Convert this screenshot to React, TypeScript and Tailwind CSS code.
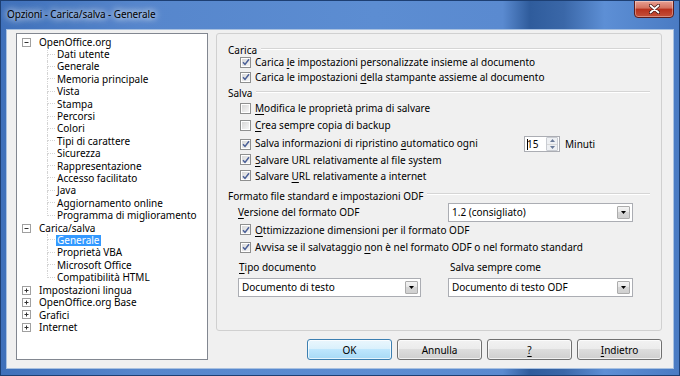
import React from "react";

type TreeRow = {
  label: string;
  level: 0 | 1;
  expander?: "-" | "+";
  selected?: boolean;
  last?: boolean;
};

const tree: TreeRow[] = [
  { label: "OpenOffice.org", level: 0, expander: "-" },
  { label: "Dati utente", level: 1 },
  { label: "Generale", level: 1 },
  { label: "Memoria principale", level: 1 },
  { label: "Vista", level: 1 },
  { label: "Stampa", level: 1 },
  { label: "Percorsi", level: 1 },
  { label: "Colori", level: 1 },
  { label: "Tipi di carattere", level: 1 },
  { label: "Sicurezza", level: 1 },
  { label: "Rappresentazione", level: 1 },
  { label: "Accesso facilitato", level: 1 },
  { label: "Java", level: 1 },
  { label: "Aggiornamento online", level: 1 },
  { label: "Programma di miglioramento", level: 1, last: true },
  { label: "Carica/salva", level: 0, expander: "-" },
  { label: "Generale", level: 1, selected: true },
  { label: "Proprietà VBA", level: 1 },
  { label: "Microsoft Office", level: 1 },
  { label: "Compatibilità HTML", level: 1, last: true },
  { label: "Impostazioni lingua", level: 0, expander: "+" },
  { label: "OpenOffice.org Base", level: 0, expander: "+" },
  { label: "Grafici", level: 0, expander: "+" },
  { label: "Internet", level: 0, expander: "+" },
];

const font = "font-['Noto_Sans','Open_Sans',sans-serif]";

const U = ({ children }: { children: React.ReactNode }) => (
  <span className="underline underline-offset-[2px] decoration-[1px]">{children}</span>
);

function Expander({ sign }: { sign: "-" | "+" }) {
  return (
    <span className="w-[9px] h-[9px] border border-[#a0a0a0] bg-white flex items-center justify-center shrink-0">
      <svg width="7" height="7" viewBox="0 0 7 7">
        <path d="M1.5 3.5h4" stroke="#333" strokeWidth="1" />
        {sign === "+" && <path d="M3.5 1.5v4" stroke="#333" strokeWidth="1" />}
      </svg>
    </span>
  );
}

function Tree() {
  return (
    <div className="w-[192px] h-[327px] bg-white border border-[#828790] pt-[2px] text-[10px] text-black">
      {tree.map((row, i) =>
        row.level === 0 ? (
          <div key={i} className="h-[12.4px] flex items-center pl-[5px]">
            <Expander sign={row.expander ?? "+"} />
            <span className="ml-[8px] leading-[12px] whitespace-nowrap">{row.label}</span>
          </div>
        ) : (
          <div key={i} className="h-[12.4px] flex items-stretch pl-[30px]">
            <div className="w-[8px] flex flex-col">
              <div className="h-1/2 border-l border-b border-dotted border-[#d4d4d4]" />
              <div className={`h-1/2 ${row.last ? "" : "border-l border-dotted border-[#d4d4d4]"}`} />
            </div>
            <div className="flex items-center ml-[1px]">
              <span
                className={`leading-[11px] px-[1px] whitespace-nowrap ${
                  row.selected ? "bg-[#3399ff] text-white" : ""
                }`}
              >
                {row.label}
              </span>
            </div>
          </div>
        )
      )}
    </div>
  );
}

function Check({ checked }: { checked?: boolean }) {
  return (
    <span className="w-[11px] h-[11px] border border-[#8e8f8f] bg-white p-[1px] shrink-0 flex">
      <span className="flex-1 bg-[linear-gradient(135deg,#d8d8d8,#f6f6f6)] flex items-center justify-center">
        {checked && (
          <svg width="8" height="8" viewBox="0 0 8 8">
            <path d="M1 4.2 L3 6.4 L7 1.2" stroke="#4a5f97" strokeWidth="1.5" fill="none" />
          </svg>
        )}
      </span>
    </span>
  );
}

function CheckRow({
  checked,
  children,
  className = "",
}: {
  checked?: boolean;
  children: React.ReactNode;
  className?: string;
}) {
  return (
    <div className={`h-[12px] flex items-center pl-[12px] ${className}`}>
      <Check checked={checked} />
      <span className="ml-[4px] leading-[12px] whitespace-nowrap">{children}</span>
    </div>
  );
}

function Heading({ children, className = "" }: { children: React.ReactNode; className?: string }) {
  return (
    <div className={`h-[12px] flex items-center pr-[11px] ${className}`}>
      <span className="leading-[12px] whitespace-nowrap">{children}</span>
      <div className="flex-1 ml-[4px] mb-[3px] h-[2px] border-t border-[#d5d5d5] border-b border-b-white" />
    </div>
  );
}

function Select({ value, w }: { value: string; w: string }) {
  return (
    <div className={`${w} h-[19px] bg-white border border-[#abadb3] flex items-center pl-[3px] pr-[2px]`}>
      <span className="flex-1 leading-[12px] whitespace-nowrap">{value}</span>
      <span className="w-[13px] h-[13px] border border-[#acacac] rounded-[1px] bg-[linear-gradient(#f4f4f4,#e6e6e6_50%,#d6d6d6_50%,#d0d0d0)] flex items-center justify-center">
        <svg width="5" height="3" viewBox="0 0 5 3">
          <path d="M0 0h5L2.5 3z" fill="#000" />
        </svg>
      </span>
    </div>
  );
}

function Button({ children, primary }: { children: React.ReactNode; primary?: boolean }) {
  return (
    <button
      className={`w-[85px] h-[21px] rounded-[3px] border text-[10px] leading-[12px] text-black shadow-[inset_0_0_0_1px_rgba(255,255,255,0.7)] ${
        primary
          ? "border-[#3c7fb1] bg-[linear-gradient(#eaf6fd,#d9f0fc_50%,#bee6fd_50%,#a7d9f5)]"
          : "border-[#707070] bg-[linear-gradient(#f2f2f2,#ebebeb_50%,#dddddd_50%,#cfcfcf)]"
      }`}
    >
      {children}
    </button>
  );
}

function Panel() {
  return (
    <div className="w-[446px] h-[298px] border border-[#d0d0d0] rounded-[3px] pt-[10px] pl-[11px] text-[10px] text-black">
      <Heading>Carica</Heading>
      <CheckRow checked>
        Carica <U>l</U>e impostazioni personalizzate insieme al documento
      </CheckRow>
      <CheckRow checked className="mt-[3px]">
        Carica le impostazioni <U>d</U>ella stampante assieme al documento
      </CheckRow>
      <Heading className="mt-[4px]">Salva</Heading>
      <CheckRow className="mt-[3px]">
        <U>M</U>odifica le proprietà prima di salvare
      </CheckRow>
      <CheckRow className="mt-[5px]">
        <U>C</U>rea sempre copia di backup
      </CheckRow>
      <div className="h-[16px] mt-[5px] flex items-center pl-[12px]">
        <Check checked />
        <span className="ml-[4px] leading-[12px] whitespace-nowrap w-[269px] -mt-[3px]">
          Salva informazioni di ripristino <U>a</U>utomatico ogni
        </span>
        <div className="w-[36px] h-[16px] bg-white border border-[#abadb3] flex items-center">
          <span className="w-[1px] h-[11px] bg-black ml-[2px]" />
          <span className="flex-1 leading-[12px] -ml-[1px]">15</span>
          <div className="w-[12px] h-[14px] flex flex-col border border-[#c9ccd2] rounded-[1px] mr-[1px]">
            <div className="flex-1 flex items-center justify-center bg-[#eef0f3] border-b border-[#d8d8d8]">
              <svg width="5" height="3" viewBox="0 0 5 3">
                <path d="M0 3h5L2.5 0z" fill="#6b7b99" />
              </svg>
            </div>
            <div className="flex-1 flex items-center justify-center bg-[#eef0f3]">
              <svg width="5" height="3" viewBox="0 0 5 3">
                <path d="M0 0h5L2.5 3z" fill="#6b7b99" />
              </svg>
            </div>
          </div>
        </div>
        <span className="ml-[5px] leading-[12px]">Minuti</span>
      </div>
      <CheckRow checked className="mt-[1.5px]">
        <U>S</U>alvare URL relativamente al file system
      </CheckRow>
      <CheckRow checked className="mt-[4px]">
        Salvare <U>U</U>RL relativamente a internet
      </CheckRow>
      <Heading className="mt-[8px]">Formato file standard e impostazioni ODF</Heading>
      <div className="h-[19px] mt-[1px] flex items-center pl-[10px]">
        <span className="w-[210px] leading-[12px]">
          <U>V</U>ersione del formato ODF
        </span>
        <Select value="1.2 (consigliato)" w="w-[185px]" />
      </div>
      <CheckRow checked className="mt-[2px]">
        <U>O</U>ttimizzazione dimensioni per il formato ODF
      </CheckRow>
      <CheckRow checked className="mt-[5.5px]">
        Avvisa se il salvataggio <U>n</U>on è nel formato ODF o nel formato standard
      </CheckRow>
      <div className="h-[12px] mt-[7.5px] flex items-center pl-[11px]">
        <span className="w-[210px] leading-[12px]">
          <U>T</U>ipo documento
        </span>
        <span className="leading-[12px] ml-[1px]">Salva sempre come</span>
      </div>
      <div className="h-[19px] mt-[5px] flex items-center pl-[10px]">
        <Select value="Documento di testo" w="w-[183px]" />
        <div className="w-[27px]" />
        <Select value="Documento di testo ODF" w="w-[185px]" />
      </div>
    </div>
  );
}

export default function App() {
  return (
    <div
      className={`${font} w-[680px] h-[376px] overflow-hidden flex flex-col border border-[#1d3f73] bg-[linear-gradient(90deg,#3f70ba,#5686cc_20%,#5c8dd2_55%,#5a8ad0_74%,#2f5c9c_78%,#3a67a8_83%,#5d8fd5_89%,#4a7bc3)]`}
    >
      <div className="h-[28px] flex items-start shrink-0">
        <span className="mt-[6px] ml-[6px] text-[10px] tracking-[-0.1px] leading-[14px] text-black [text-shadow:0_0_6px_#ffffff,0_0_10px_#ffffff]">
          Opzioni - Carica/salva - Generale
        </span>
        <div className="ml-auto mr-[5px] -mt-[1px] w-[40px] h-[18px] rounded-b-[4px] border border-[#5c1d1d] bg-[linear-gradient(#e8a093,#d3705e_45%,#b8301c_50%,#c4503a)] flex items-center justify-center shadow-[inset_0_0_0_1px_rgba(255,255,255,0.35)]">
          <svg width="11" height="10" viewBox="0 0 11 10">
            <path d="M1.5 1.5 L9.5 8.5 M9.5 1.5 L1.5 8.5" stroke="#3a1010" strokeWidth="3.2" strokeLinecap="round" />
            <path d="M1.5 1.5 L9.5 8.5 M9.5 1.5 L1.5 8.5" stroke="#ffffff" strokeWidth="1.8" strokeLinecap="round" />
          </svg>
        </div>
      </div>
      <div className="mx-[5px] h-[340px] bg-[#f0f0f0] border border-[#a9c1e0] flex gap-[8px] pt-[3px] pl-[9px]">
        <Tree />
        <div className="flex flex-col">
          <Panel />
          <div className="mt-[8px] flex justify-end gap-[5px]">
            <Button primary>OK</Button>
            <Button>Annulla</Button>
            <Button>
              <U>?</U>
            </Button>
            <Button>
              <U>I</U>ndietro
            </Button>
          </div>
        </div>
      </div>
    </div>
  );
}
